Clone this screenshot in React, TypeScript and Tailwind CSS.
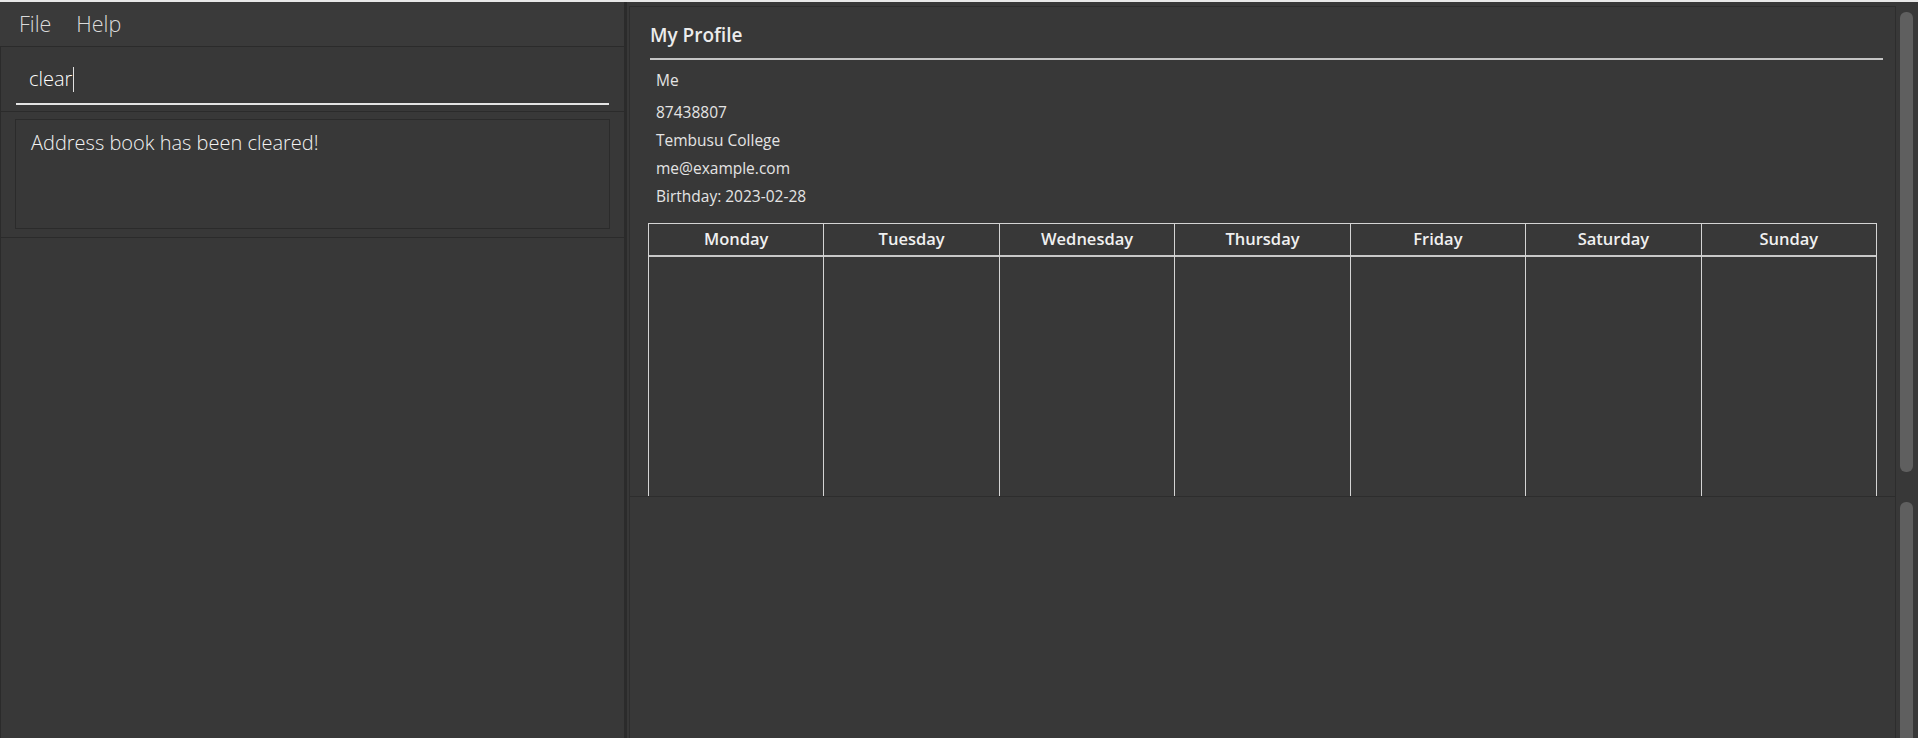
import React from "react";

const days = ["Monday", "Tuesday", "Wednesday", "Thursday", "Friday", "Saturday", "Sunday"];

const details = ["87438807", "Tembusu College", "me@example.com", "Birthday: 2023-02-28"];

function Scrollbar({ full }: { full?: boolean }) {
  return (
    <div className="w-[22px] shrink-0 pl-[4px] pt-[6px]">
      <div
        className={
          full
            ? "w-[13px] h-[460px] rounded-[6px] bg-[#5f5f5f]"
            : "w-[13px] h-[300px] rounded-[6px] bg-[#5f5f5f]"
        }
      />
    </div>
  );
}

export default function App() {
  return (
    <div className="h-[738px] w-full overflow-hidden bg-[#383838] border-t-2 border-[#e8e8e8] flex font-['Open_Sans',sans-serif]">
      {/* left column */}
      <div className="w-[624px] shrink-0 flex flex-col">
        <div className="h-[44px] flex items-center gap-[25px] pl-[19px] text-[21.5px] font-light text-[#dadada] bg-[#3a3a3a]">
          <span>File</span>
          <span>Help</span>
        </div>

        {/* command box */}
        <div className="h-[66px] border-y border-l border-[#2b2b2b] px-[15px] pt-[16px]">
          <div className="h-[42px] flex items-center pb-[8px] pl-[13px] border-b-2 border-[#e4e4e4] text-[20px] font-light text-white">
            clear
            <span className="w-px h-[25px] bg-[#e0e0e0] ml-px" />
          </div>
        </div>

        {/* result display */}
        <div className="h-[126px] border-b border-l border-[#2b2b2b] px-[14px] pt-[7px]">
          <div className="h-[110px] border border-[#2b2b2b] pl-[15px] pt-[8px] text-[20px] leading-[30px] font-light text-[#f2f2f2]">
            Address book has been cleared!
          </div>
        </div>

        <div className="flex-1 border-l border-[#2b2b2b]" />
      </div>

      <div className="w-[3px] shrink-0 bg-[#2b2b2b]" />

      {/* right column */}
      <div className="flex-1 flex flex-col">
        <div className="h-[494px] flex pl-[2px] pt-[4px]">
          <div className="flex-1 border-t border-x border-[#2d2d2d] overflow-hidden">
            <div className="pl-[20px] pr-[12px]">
              <div className="pt-[16px] pb-[11px] leading-[24px] text-[19px] font-semibold text-[#ececec] border-b-2 border-[#c4c4c4]">
                My Profile
              </div>
            </div>
            <div className="pl-[26px] text-[15.5px] leading-[28px] text-[#e4e4e4]">
              <div className="mt-[6px]">Me</div>
              <div className="mt-[4px]">
                {details.map((d) => (
                  <div key={d}>{d}</div>
                ))}
              </div>
            </div>
            <div className="mx-[18px] mt-[13px] grid grid-cols-7 border-t border-r border-[#d4d4d4]">
              {days.map((d) => (
                <div key={d} className="border-l border-[#d4d4d4]">
                  <div className="h-[33px] flex items-center justify-center border-b-2 border-[#c8c8c8] text-[16.5px] font-semibold text-[#f0f0f0]">
                    {d}
                  </div>
                  <div className="h-[320px]" />
                </div>
              ))}
            </div>
          </div>
          <Scrollbar full />
        </div>

        <div className="h-[4px] bg-[#2b2b2b]" />

        <div className="flex-1 flex pl-[2px]">
          <div className="flex-1 border-t border-x border-[#2d2d2d]" />
          <Scrollbar />
        </div>
      </div>
    </div>
  );
}
